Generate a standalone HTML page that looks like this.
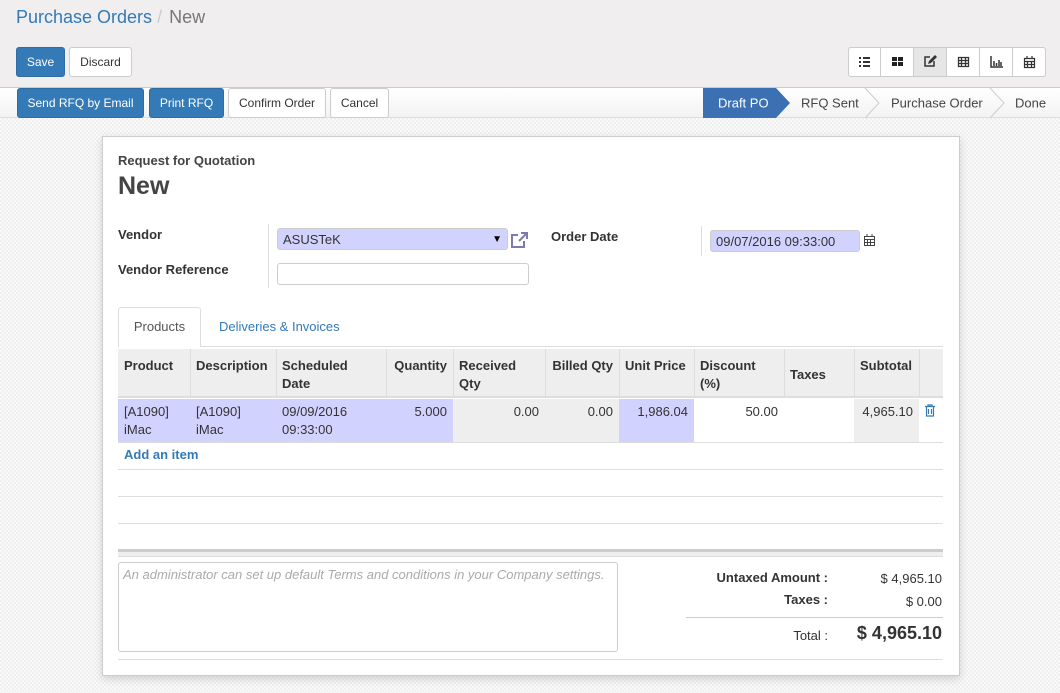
<!DOCTYPE html>
<html><head><meta charset="utf-8"><style>
*{box-sizing:border-box;margin:0;padding:0}
body{width:1060px;height:693px;overflow:hidden;font-family:"Liberation Sans",sans-serif;font-size:13px;color:#333;position:relative;background:#f0eeee}
.a{position:absolute}
.n{font-family:"Liberation Sans Narrow","Liberation Sans",sans-serif}
.btn{position:absolute;height:30px;border-radius:3px;font-size:12px;line-height:28px;text-align:center;border:1px solid #ccc;background:#fff;color:#333}
.bp{background:#337ab7;border-color:#2e6da4;color:#fff}
.body{position:absolute;left:0;top:118px;width:1060px;height:575px;background-color:#f9f9f9;background-image:linear-gradient(45deg,#efefef 25%,transparent 25%,transparent 75%,#efefef 75%),linear-gradient(45deg,#efefef 25%,transparent 25%,transparent 75%,#efefef 75%);background-size:4px 4px;background-position:0 0,2px 2px}
.sheet{position:absolute;left:102px;top:136px;width:858px;height:540px;background:#fff;border:1px solid #ccc;box-shadow:0 3px 8px rgba(0,0,0,.15)}
.c{position:absolute;font-size:13px;padding:9px 6px;line-height:18px}
.h{font-weight:bold}
.r{text-align:right}
.lav{background:#d2d2ff}
.gr{background:#eee}
</style></head><body>
<div class="a" style="left:16px;top:7px;font-size:18px;color:#337ab7">Purchase Orders<span style="color:#ccc;padding:0 7px 0 5px">/</span><span style="color:#777">New</span></div>
<div class="btn bp" style="left:16px;top:47px;width:49px">Save</div>
<div class="btn" style="left:69px;top:47px;width:63px">Discard</div>
<div class="a" style="left:848px;top:47px;width:198px;height:30px;border:1px solid #ccc;border-radius:3px;background:#fff"></div>
<div class="a" style="left:913px;top:48px;width:33px;height:28px;background:#e6e6e6"></div>
<svg class="a" style="left:848px;top:47px" width="198" height="30" fill="none" stroke="#333" stroke-width="2">
<line x1="32.5" y1="1" x2="32.5" y2="29" stroke="#ccc" stroke-width="1"/><line x1="65.5" y1="1" x2="65.5" y2="29" stroke="#ccc" stroke-width="1"/><line x1="98.5" y1="1" x2="98.5" y2="29" stroke="#ccc" stroke-width="1"/><line x1="131.5" y1="1" x2="131.5" y2="29" stroke="#ccc" stroke-width="1"/><line x1="164.5" y1="1" x2="164.5" y2="29" stroke="#ccc" stroke-width="1"/>
<path d="M11 11h2M11 15h2M11 19h2M15 11h7M15 15h7M15 19h7"/>
<path d="M44 10h5v4h-5zM50 10h5v4h-5zM44 15h5v4h-5zM50 15h5v4h-5z" fill="#222" stroke="none"/>
<path d="M86 14v5h-9v-9h5" stroke-width="1.5"/><path d="M80 17l1-3 6-6 2 2-6 6z" fill="#333" stroke="none"/>
<path d="M110.5 10.5h10v9h-10zM110.5 13.5h10M110.5 16.5h10M113.5 10.5v9M117.5 10.5v9" stroke-width="1.3"/>
<path d="M143 9v11h12M146 19v-5M148.5 19v-3M151 19v-6M153 19v-4" stroke-width="1.5"/>
<path d="M176.5 11.5h10v9h-10zM176.5 14.5h10M179.5 14.5v6M183.5 14.5v6M176.5 17.5h10M179 9v3M184 9v3" stroke-width="1.2"/>
</svg>
<div class="a" style="left:0;top:87px;width:1060px;height:31px;background:linear-gradient(#fff,#f3f3f3);border-top:1px solid #ccc;border-bottom:1px solid #ddd"></div>
<div class="btn bp" style="left:17px;top:88px;width:127px">Send RFQ by Email</div>
<div class="btn bp" style="left:149px;top:88px;width:75px">Print RFQ</div>
<div class="btn" style="left:228px;top:88px;width:98px">Confirm Order</div>
<div class="btn" style="left:330px;top:88px;width:59px">Cancel</div>
<svg class="a" style="left:703px;top:88px" width="357" height="30">
<path d="M0 0h73l14 15-14 15H0z" fill="#3b70b3"/>
<path d="M162 0l14 15-14 15M287 0l14 15-14 15" fill="none" stroke="#ccc"/>
<text x="15" y="19.5" fill="#fff" font-size="13" font-family="Liberation Sans">Draft PO</text>
<text x="98" y="19.5" fill="#444" font-size="13" font-family="Liberation Sans">RFQ Sent</text>
<text x="188" y="19.5" fill="#444" font-size="13" font-family="Liberation Sans">Purchase Order</text>
<text x="312" y="19.5" fill="#444" font-size="13" font-family="Liberation Sans">Done</text>
</svg>
<div class="body"></div>
<div class="sheet"></div>
<div class="n">
<div class="a h" style="left:118px;top:153px;font-size:13px;color:#444">Request for Quotation</div>
<div class="a h" style="left:118px;top:172px;font-size:25px;color:#444">New</div>
<div class="a h" style="left:118px;top:227px">Vendor</div>
<div class="a h" style="left:118px;top:262px">Vendor Reference</div>
<div class="a" style="left:268px;top:224px;width:1px;height:64px;background:#ddd"></div>
<div class="a" style="left:277px;top:228px;width:231px;height:22px;background:#d2d2ff;border:1px solid #ccc;border-radius:3px;padding:2px 5px;line-height:17px">ASUSTeK<span style="position:absolute;right:5px;font-size:10px;color:#000">▼</span></div>
<svg class="a" style="left:510px;top:231px" width="20" height="18" fill="none" stroke="#7c7bad" stroke-width="2"><path d="M8 4H2v12h12v-6M9 10l8-8M11 2h6v6"/></svg>
<div class="a" style="left:277px;top:263px;width:252px;height:22px;border:1px solid #ccc;border-radius:3px"></div>
<div class="a h" style="left:551px;top:229px">Order Date</div>
<div class="a" style="left:701px;top:226px;width:1px;height:30px;background:#ddd"></div>
<div class="a" style="left:710px;top:230px;width:150px;height:22px;background:#d2d2ff;border:1px solid #ccc;border-radius:3px;padding:2px 5px;line-height:17px">09/07/2016 09:33:00</div>
<svg class="a" style="left:863px;top:233px" width="13" height="14" fill="none" stroke="#444" stroke-width="1"><path d="M1.5 3.5h10v9h-10zM1.5 6.5h10M4.5 6.5v6M7.5 6.5v6M1.5 9.5h10M4 1v3M9 1v3"/></svg>
<div class="a" style="left:118px;top:346px;width:825px;height:1px;background:#ddd"></div>
<div class="a" style="left:118px;top:307px;width:83px;height:40px;background:#fff;border:1px solid #ddd;border-bottom:none;border-radius:3px 3px 0 0;padding:11px 0;text-align:center;color:#555">Products</div>
<div class="a" style="left:219px;top:319px;color:#337ab7">Deliveries &amp; Invoices</div>
<div class="a gr" style="left:118px;top:349px;width:825px;height:49px;border-bottom:2px solid #ddd"></div>
<div class="c h" style="left:118px;top:348px">Product</div>
<div class="c h" style="left:190px;top:348px">Description</div>
<div class="c h" style="left:276px;top:348px">Scheduled<br>Date</div>
<div class="c h r" style="left:386px;top:348px;width:67px">Quantity</div>
<div class="c h" style="left:453px;top:348px">Received<br>Qty</div>
<div class="c h r" style="left:545px;top:348px;width:74px">Billed Qty</div>
<div class="c h" style="left:619px;top:348px">Unit Price</div>
<div class="c h" style="left:694px;top:348px">Discount<br>(%)</div>
<div class="c h" style="left:784px;top:357px">Taxes</div>
<div class="c h" style="left:854px;top:348px">Subtotal</div>
<div class="a" style="left:190px;top:349px;width:1px;height:49px;background:#ddd"></div>
<div class="a" style="left:276px;top:349px;width:1px;height:49px;background:#ddd"></div>
<div class="a" style="left:386px;top:349px;width:1px;height:49px;background:#ddd"></div>
<div class="a" style="left:453px;top:349px;width:1px;height:49px;background:#ddd"></div>
<div class="a" style="left:545px;top:349px;width:1px;height:49px;background:#ddd"></div>
<div class="a" style="left:619px;top:349px;width:1px;height:49px;background:#ddd"></div>
<div class="a" style="left:694px;top:349px;width:1px;height:49px;background:#ddd"></div>
<div class="a" style="left:784px;top:349px;width:1px;height:49px;background:#ddd"></div>
<div class="a" style="left:854px;top:349px;width:1px;height:49px;background:#ddd"></div>
<div class="a" style="left:919px;top:349px;width:1px;height:49px;background:#ddd"></div>
<div class="a lav" style="left:118px;top:399px;width:335px;height:43px"></div>
<div class="a gr" style="left:453px;top:399px;width:166px;height:43px"></div>
<div class="a lav" style="left:619px;top:399px;width:75px;height:43px"></div>
<div class="a gr" style="left:854px;top:399px;width:65px;height:43px"></div>
<div class="a" style="left:118px;top:442px;width:825px;height:1px;background:#ddd"></div>
<div class="c" style="left:118px;top:394px">[A1090]<br>iMac</div>
<div class="c" style="left:190px;top:394px">[A1090]<br>iMac</div>
<div class="c" style="left:276px;top:394px">09/09/2016<br>09:33:00</div>
<div class="c r" style="left:386px;top:394px;width:67px">5.000</div>
<div class="c r" style="left:453px;top:394px;width:92px">0.00</div>
<div class="c r" style="left:545px;top:394px;width:74px">0.00</div>
<div class="c r" style="left:619px;top:394px;width:75px">1,986.04</div>
<div class="c r" style="left:694px;top:394px;width:90px">50.00</div>
<div class="c r" style="left:854px;top:394px;width:65px">4,965.10</div>
<svg class="a" style="left:924px;top:404px" width="12" height="13" fill="none" stroke="#337ab7" stroke-width="1.2"><path d="M1 2.5h10M4 2.5V1h4v1.5M2.5 3v9h7V3M4.5 5v5M7.5 5v5"/></svg>
<div class="a h" style="left:124px;top:447px;color:#337ab7">Add an item</div>
<div class="a" style="left:118px;top:469px;width:825px;height:1px;background:#ddd"></div>
<div class="a" style="left:118px;top:496px;width:825px;height:1px;background:#ddd"></div>
<div class="a" style="left:118px;top:523px;width:825px;height:1px;background:#ddd"></div>
<div class="a" style="left:118px;top:549px;width:825px;height:8px;background:#eee;border-top:3px solid #ccc;border-bottom:1px solid #ddd"></div>
<div class="a" style="left:118px;top:562px;width:500px;height:90px;border:1px solid #ccc;border-radius:3px;padding:4px;color:#aaa;font-style:italic;line-height:16px">An administrator can set up default Terms and conditions in your Company settings.</div>
<div class="a h r" style="left:690px;top:570px;width:138px">Untaxed Amount :</div>
<div class="a r" style="left:840px;top:571px;width:102px">$ 4,965.10</div>
<div class="a h r" style="left:690px;top:592px;width:138px">Taxes :</div>
<div class="a r" style="left:840px;top:594px;width:102px">$ 0.00</div>
<div class="a" style="left:686px;top:617px;width:257px;height:1px;background:#ccc"></div>
<div class="a r" style="left:690px;top:628px;width:138px">Total :</div>
<div class="a h r" style="left:820px;top:623px;width:122px;font-size:18px">$ 4,965.10</div>
<div class="a" style="left:118px;top:659px;width:825px;height:1px;background:#ddd"></div>
</div>
</body></html>
